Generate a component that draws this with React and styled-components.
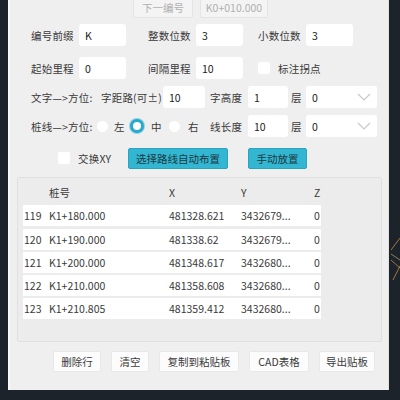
import React from 'react'
import styled, { createGlobalStyle } from 'styled-components'

const Global = createGlobalStyle`
  html, body { margin: 0; padding: 0; background: #1d232b; }
  body { font-family: "Noto Sans CJK SC", "Noto Sans", sans-serif; font-size: 10.5px; color: #3a3a3a; }
`

const Screen = styled.div`
  width: 400px;
  height: 400px;
  display: flex;
  overflow: hidden;
  position: relative;
`

const Panel = styled.div`
  margin-left: 8px;
  width: 381px;
  height: 390px;
  background: #efefef;
  border-left: 2px solid #f7f9fb;
  border-right: 1px solid #e2e2e2;
  box-sizing: border-box;
  display: flex;
  flex-direction: column;
  overflow: hidden;
`

const TopRow = styled.div`
  display: flex;
  gap: 7px;
  margin-top: -4px;
  padding-left: 123px;
  height: 22px;
`

const GhostButton = styled.div`
  width: ${p => p.w}px;
  height: 22px;
  box-sizing: border-box;
  border: 1px solid #e4e4e4;
  background: #f4f4f4;
  color: #b0b0b0;
  display: flex;
  align-items: center;
  justify-content: center;
  border-radius: 2px;
`

const Row = styled.div`
  display: flex;
  align-items: center;
  height: 22px;
  padding-left: ${p => p.pl || 21}px;
  margin-top: ${p => p.mt}px;
`

const Label = styled.span`
  width: ${p => p.w}px;
  margin-left: ${p => p.ml || 0}px;
  margin-right: ${p => p.mr ?? 6}px;
  white-space: nowrap;
  letter-spacing: 0.2px;
`

const Input = styled.div`
  width: ${p => p.w}px;
  height: 22px;
  box-sizing: border-box;
  background: #fff;
  border-radius: 3px;
  padding-left: 6px;
  display: flex;
  align-items: center;
  color: #222;
`

const Select = styled(Input)`
  width: 71px;
  justify-content: space-between;
  padding-right: 6px;
  border-radius: 2px;
`

const Check = styled.span`
  width: 12px;
  height: 12px;
  background: #fff;
  border-radius: 2px;
  margin-left: ${p => p.ml || 0}px;
  margin-right: 8px;
  flex-shrink: 0;
`

const Radio = styled.span`
  width: ${p => (p.on ? 8 : 11)}px;
  height: ${p => (p.on ? 8 : 11)}px;
  border-radius: 50%;
  background: #fff;
  border: ${p => (p.on ? '3px solid #2aa8c9' : '0')};
  box-shadow: ${p => (p.on ? '0 0 0 1px #8fd3e6' : 'none')};
  margin-left: ${p => p.ml || 0}px;
  margin-right: 6px;
  flex-shrink: 0;
`

const Teal = styled.div`
  height: 21px;
  width: ${p => p.w}px;
  margin-left: ${p => p.ml || 0}px;
  background: #33b6d2;
  border: 1px solid #29a3be;
  box-sizing: border-box;
  border-radius: 2px;
  display: flex;
  align-items: center;
  justify-content: center;
  color: #1d3942;
`

const Table = styled.div`
  margin: 8px 0 0 7px;
  width: 365px;
  height: 165px;
  box-sizing: border-box;
  border: 1px solid #e0e0e0;
  border-radius: 2px;
  background: #ececec;
  padding: 0 0 0 5px;
  display: flex;
  flex-direction: column;
  gap: 2.3px;
`

const TRow = styled.div`
  display: grid;
  grid-template-columns: 25px 120px 72px 73px 1fr;
  align-items: center;
  height: 21px;
  width: 298px;
  background: ${p => (p.head ? 'transparent' : '#fff')};
  flex-shrink: 0;
  margin-top: ${p => (p.head ? 4 : 0)}px;
  & > span { padding-left: 1px; white-space: nowrap; overflow: visible; }
`

const Footer = styled.div`
  display: flex;
  gap: 10px;
  padding-left: 43px;
  margin-top: 9px;
`

const WhiteButton = styled.div`
  width: ${p => p.w}px;
  height: 21px;
  background: #fcfcfc;
  border: 1px solid #e8e8e8;
  box-sizing: border-box;
  display: flex;
  align-items: center;
  justify-content: center;
  border-radius: 2px;
`

const Chevron = () => (
  <svg width="14" height="8" viewBox="0 0 14 8">
    <path d="M1 1l6 6 6-6" fill="none" stroke="#c8c8c8" strokeWidth="1.2" />
  </svg>
)

const Cad = styled.svg`
  position: absolute;
  right: 0;
  top: 230px;
`

const rows = [
  ['119', 'K1+180.000', '481328.621', '3432679...', '0'],
  ['120', 'K1+190.000', '481338.62', '3432679...', '0'],
  ['121', 'K1+200.000', '481348.617', '3432680...', '0'],
  ['122', 'K1+210.000', '481358.608', '3432680...', '0'],
  ['123', 'K1+210.805', '481359.412', '3432680...', '0'],
]

export default function App() {
  return (
    <Screen>
      <Global />
      <Panel>
        <TopRow>
          <GhostButton w={60}>下一编号</GhostButton>
          <GhostButton w={68}>K0+010.000</GhostButton>
        </TopRow>
        <Row mt={6}>
          <Label w={42}>编号前缀</Label>
          <Input w={47}>K</Input>
          <Label w={42} ml={22}>整数位数</Label>
          <Input w={47}>3</Input>
          <Label w={42} ml={15}>小数位数</Label>
          <Input w={47}>3</Input>
        </Row>
        <Row mt={11}>
          <Label w={42}>起始里程</Label>
          <Input w={47}>0</Input>
          <Label w={42} ml={22}>间隔里程</Label>
          <Input w={47}>10</Input>
          <Check ml={15} />
          <Label w={42}>标注拐点</Label>
        </Row>
        <Row mt={7}>
          <Label w={62} mr={8}>文字—&gt;方位:</Label>
          <Label w={56}>字距路(可±)</Label>
          <Input w={42}>10</Input>
          <Label w={34} ml={5} mr={4}>字高度</Label>
          <Input w={40}>1</Input>
          <Label w={12} ml={3} mr={3}>层</Label>
          <Select>0<Chevron /></Select>
        </Row>
        <Row mt={7}>
          <Label w={62} mr={4}>桩线—&gt;方位:</Label>
          <Radio />
          <Label w={10}>左</Label>
          <Radio on />
          <Label w={10} mr={8} ml={1}>中</Label>
          <Radio />
          <Label w={10} ml={2} mr={12}>右</Label>
          <Label w={34} mr={4}>线长度</Label>
          <Input w={40}>10</Input>
          <Label w={12} ml={3} mr={3}>层</Label>
          <Select>0<Chevron /></Select>
        </Row>
        <Row mt={10} pl={48}>
          <Check />
          <Label w={38} mr={12}>交换XY</Label>
          <Teal w={100}>选择路线自动布置</Teal>
          <Teal w={59} ml={20}>手动放置</Teal>
        </Row>
        <Table>
          <TRow head>
            <span />
            <span>桩号</span>
            <span>X</span>
            <span>Y</span>
            <span>Z</span>
          </TRow>
          {rows.map(r => (
            <TRow key={r[0]}>
              {r.map((c, i) => <span key={i}>{c}</span>)}
            </TRow>
          ))}
        </Table>
        <Footer>
          <WhiteButton w={48}>删除行</WhiteButton>
          <WhiteButton w={38}>清空</WhiteButton>
          <WhiteButton w={80}>复制到粘贴板</WhiteButton>
          <WhiteButton w={60}>CAD表格</WhiteButton>
          <WhiteButton w={56}>导出贴板</WhiteButton>
        </Footer>
      </Panel>
      <Cad width="9" height="70" viewBox="0 0 9 70">
        <path d="M0 20l9 -12M0 30l9 8M2 50l7 -14" stroke="#c98a3a" strokeWidth="0.8" fill="none" />
        <path d="M0 24l9 6" stroke="#d9c36a" strokeWidth="0.6" fill="none" />
      </Cad>
    </Screen>
  )
}
